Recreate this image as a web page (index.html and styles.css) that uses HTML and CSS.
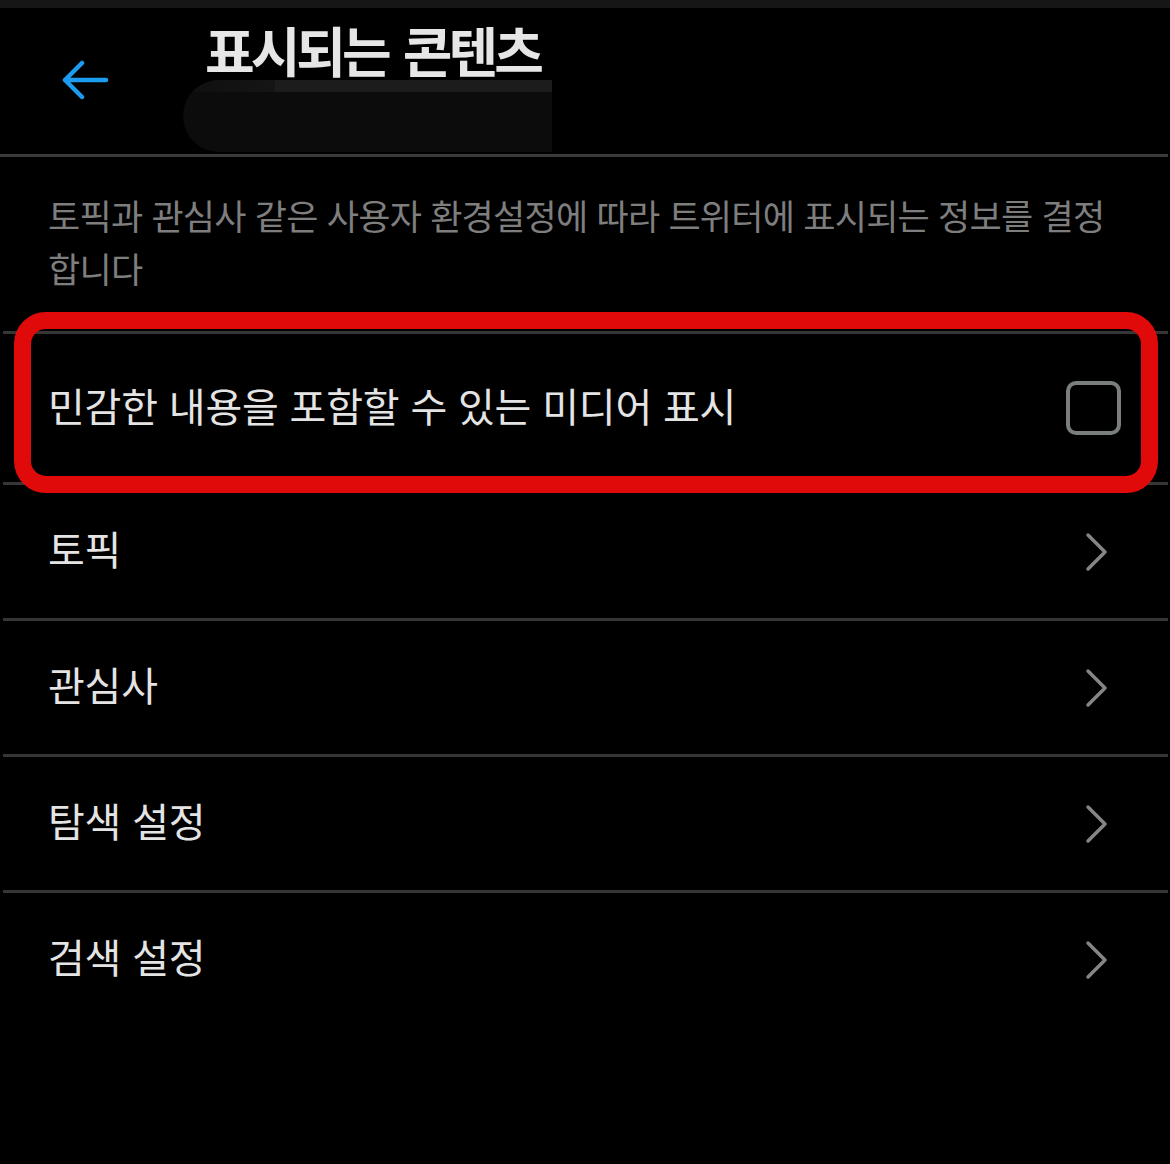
FILE: index.html
```html
<!DOCTYPE html>
<html lang="ko">
<head>
    <meta charset="UTF-8">
    <title>표시되는 콘텐츠</title>
    <link rel="stylesheet" href="styles.css">
</head>
<body>

<div class="page">
    <div class="statusbar"></div>

    <header class="topbar">
        <div class="back">
            <svg width="48" height="40" viewBox="0 0 48 40">
                <path d="M20 3 L3 20 L20 37 M3 20 L44 20" fill="none" stroke="#1d9bf0" stroke-width="4.5" stroke-linecap="round" stroke-linejoin="round"/>
            </svg>
        </div>
        <div class="titles">
            <h1 class="title">표시되는 콘텐츠</h1>
            <div class="subtitle"><div class="subtitle-top"></div></div>
        </div>
    </header>

    <p class="desc">토픽과 관심사 같은 사용자 환경설정에 따라 트위터에 표시되는 정보를 결정합니다</p>

    <div class="list">
        <div class="row row-check">
            <span class="label">민감한 내용을 포함할 수 있는 미디어 표시</span>
            <span class="checkbox"></span>
        </div>
        <div class="row">
            <span class="label">토픽</span>
            <svg class="chev" width="26" height="40" viewBox="0 0 26 40"><path d="M4 3 L21 20 L4 37" fill="none" stroke="#858585" stroke-width="3.5" stroke-linecap="round" stroke-linejoin="round"/></svg>
        </div>
        <div class="row">
            <span class="label">관심사</span>
            <svg class="chev" width="26" height="40" viewBox="0 0 26 40"><path d="M4 3 L21 20 L4 37" fill="none" stroke="#858585" stroke-width="3.5" stroke-linecap="round" stroke-linejoin="round"/></svg>
        </div>
        <div class="row">
            <span class="label">탐색 설정</span>
            <svg class="chev" width="26" height="40" viewBox="0 0 26 40"><path d="M4 3 L21 20 L4 37" fill="none" stroke="#858585" stroke-width="3.5" stroke-linecap="round" stroke-linejoin="round"/></svg>
        </div>
        <div class="row">
            <span class="label">검색 설정</span>
            <svg class="chev" width="26" height="40" viewBox="0 0 26 40"><path d="M4 3 L21 20 L4 37" fill="none" stroke="#858585" stroke-width="3.5" stroke-linecap="round" stroke-linejoin="round"/></svg>
        </div>
    </div>

    <div class="highlight"></div>
</div>

</body>
</html>
```

FILE: styles.css
```css
body {
    margin: 0;
    background: #000;
    font-family: "Noto Sans CJK KR", "Noto Sans", sans-serif;
    color: #e4e4e4;
}
.page {
    position: relative;
    width: 1170px;
    height: 1164px;
    background: #000;
    overflow: hidden;
}
.statusbar {
    height: 8px;
    background: #161616;
}
.topbar {
    display: flex;
    height: 146px;
    border-bottom: 3px solid #3a3a3a;
    margin-right: 2px;
}
.back {
    margin-left: 62px;
    margin-top: 52px;
    width: 48px;
    height: 40px;
}
.titles {
    margin-left: 73px;
    display: flex;
    flex-direction: column;
}
.title {
    margin: 15px 0 0 22px;
    font-size: 54px;
    line-height: 54px;
    font-weight: 700;
    color: #e6e6e6;
    letter-spacing: -4px;
    word-spacing: 4px;
}
.subtitle {
    margin-top: 3px;
    width: 369px;
    height: 72px;
    background: #0c0c0c;
    border-radius: 36px 0 0 36px;
    overflow: hidden;
}
.subtitle-top {
    height: 12px;
    background: linear-gradient(90deg, #0f0f0f 0, #151515 25%, #1c1c1c 25%, #1c1c1c 100%);
}
.desc {
    margin: 0;
    padding: 31px 48px 37px 48px;
    font-size: 35px;
    line-height: 53px;
    letter-spacing: -0.75px;
    color: #7e7e7e;
}
.list {
    margin: 0 2px 0 3px;
}
.row {
    display: flex;
    align-items: center;
    justify-content: space-between;
    height: 133px;
    padding: 0 47px 0 45px;
    border-top: 3px solid #363636;
    box-sizing: content-box;
}
.row .label {
    margin-bottom: 7px;
}
.row-check {
    height: 148px;
}
.label {
    font-size: 40px;
    letter-spacing: -0.2px;
    color: #e4e4e4;
}
.checkbox {
    width: 47px;
    height: 46px;
    border: 4px solid #7a7e7f;
    border-radius: 10px;
}
.chev {
    margin-right: 11px;
}
.highlight {
    position: absolute;
    left: 14px;
    top: 312px;
    width: 1144px;
    height: 181px;
    box-sizing: border-box;
    border: 17px solid #e00a0a;
    border-radius: 32px;
}
```
